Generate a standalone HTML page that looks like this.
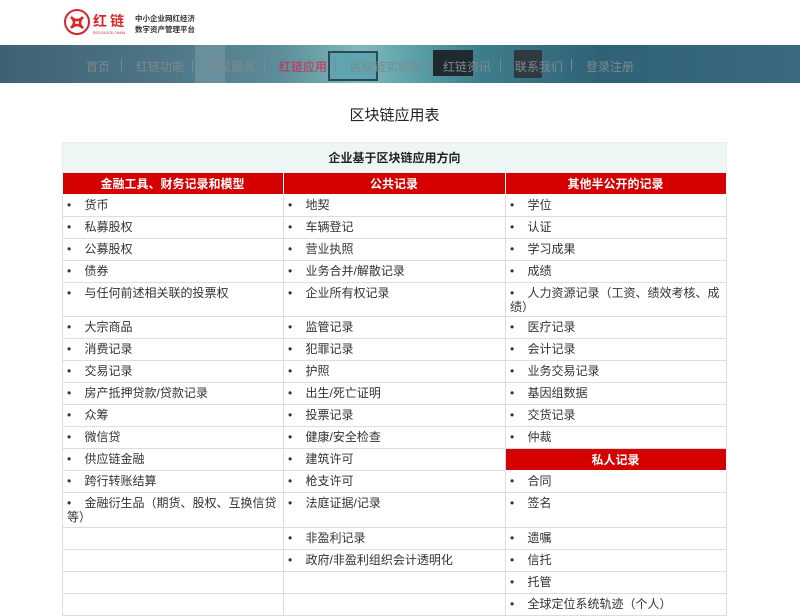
<!DOCTYPE html>
<html><head><meta charset="utf-8"><style>
*{margin:0;padding:0;box-sizing:border-box}
body{width:800px;height:609px;overflow:hidden;background:#fff;font-family:"Liberation Sans","Noto Sans CJK SC",sans-serif;font-size:12px;color:#333;position:relative}
.logo{position:absolute;left:63px;top:9px}
.nav{position:absolute;left:0;top:45px;width:800px;height:38px;background:linear-gradient(90deg,#3d6274 0%,#4d7585 20%,#5c8d98 35%,#7fb8bd 45%,#5aa0a8 52%,#3f7d8c 60%,#2f6277 75%,#3a6a80 100%)}
.nav span{position:absolute;top:13px;font-size:12px;color:#7d8a8e}
.nav i{position:absolute;top:14px;width:1px;height:12px;background:#7d8a8e}
h1{position:absolute;top:104px;left:0;width:789px;text-align:center;font-size:15px;font-weight:normal;color:#222}
table{position:absolute;left:62px;top:142px;width:664px;border-collapse:collapse;table-layout:fixed}
td{border:1px solid #ddd;height:22px;padding:3px 5px 0 4px;vertical-align:top;line-height:14px;font-size:12px}
tr.t td{background:#eef6f5;height:30px;text-align:center;font-weight:bold;vertical-align:middle;padding:0;font-size:12px;color:#222;border-color:#e6eeee}
td.h{background:#d50000;color:#fff;text-align:center;font-weight:bold;padding-top:4px;border-color:#fff}
tr.d td{height:34px}
tr.e td{height:35px}
</style></head><body>
<div class="logo">
<svg width="140" height="28" viewBox="0 0 140 28">
<circle cx="14" cy="13" r="12" fill="none" stroke="#d9252a" stroke-width="2"/>
<path d="M8 8 Q14 14 20 8 Q14 14 20 19 Q14 13 8 19 Q14 13 8 8Z" fill="none" stroke="#d9252a" stroke-width="2.5"/>
<text x="30" y="17" font-size="14" font-weight="bold" fill="#d9252a" font-family="Noto Sans CJK SC">红 链</text>
<text x="30" y="25" font-size="3.5" fill="#d9252a">RED BLOCK CHAIN</text>
<text x="72" y="12" font-size="7.5" font-weight="bold" fill="#333" font-family="Noto Sans CJK SC">中小企业网红经济</text>
<text x="72" y="23" font-size="7.5" font-weight="bold" fill="#333" font-family="Noto Sans CJK SC">数字资产管理平台</text>
</svg></div>
<div class="nav">
<div style="position:absolute;left:195px;top:0;width:30px;height:38px;background:#86a9b4;opacity:.4"></div>
<div style="position:absolute;left:328px;top:6px;width:50px;height:30px;background:#5fa4ae;border:2px solid #2c4a55"></div>
<div style="position:absolute;left:433px;top:5px;width:40px;height:26px;background:#1e2a30"></div>
<div style="position:absolute;left:514px;top:5px;width:28px;height:28px;background:#2e3a40"></div>
<span style="left:86px">首页</span><i style="left:121px"></i>
<span style="left:136px">红链功能</span><i style="left:192px"></i>
<span style="left:207px">专属服务</span><i style="left:264px"></i>
<span style="left:279px;color:#d9254e">红链应用</span><i style="left:335px"></i>
<span style="left:350px">区块链实验室</span><i style="left:428px"></i>
<span style="left:443px">红链资讯</span><i style="left:500px"></i>
<span style="left:515px">联系我们</span><i style="left:571px"></i>
<span style="left:586px">登录注册</span>
</div>
<h1>区块链应用表</h1>
<table>
<colgroup><col style="width:221px"><col style="width:222px"><col style="width:221px"></colgroup>
<tr class="t"><td colspan="3">企业基于区块链应用方向</td></tr>
<tr><td class="h">金融工具、财务记录和模型</td><td class="h">公共记录</td><td class="h">其他半公开的记录</td></tr>
<tr><td>•&nbsp;&nbsp;&nbsp;&nbsp;货币</td><td>•&nbsp;&nbsp;&nbsp;&nbsp;地契</td><td>•&nbsp;&nbsp;&nbsp;&nbsp;学位</td></tr>
<tr><td>•&nbsp;&nbsp;&nbsp;&nbsp;私募股权</td><td>•&nbsp;&nbsp;&nbsp;&nbsp;车辆登记</td><td>•&nbsp;&nbsp;&nbsp;&nbsp;认证</td></tr>
<tr><td>•&nbsp;&nbsp;&nbsp;&nbsp;公募股权</td><td>•&nbsp;&nbsp;&nbsp;&nbsp;营业执照</td><td>•&nbsp;&nbsp;&nbsp;&nbsp;学习成果</td></tr>
<tr><td>•&nbsp;&nbsp;&nbsp;&nbsp;债券</td><td>•&nbsp;&nbsp;&nbsp;&nbsp;业务合并/解散记录</td><td>•&nbsp;&nbsp;&nbsp;&nbsp;成绩</td></tr>
<tr class="d"><td>•&nbsp;&nbsp;&nbsp;&nbsp;与任何前述相关联的投票权</td><td>•&nbsp;&nbsp;&nbsp;&nbsp;企业所有权记录</td><td>•&nbsp;&nbsp;&nbsp;&nbsp;人力资源记录（工资、绩效考核、成<br>绩）</td></tr>
<tr><td>•&nbsp;&nbsp;&nbsp;&nbsp;大宗商品</td><td>•&nbsp;&nbsp;&nbsp;&nbsp;监管记录</td><td>•&nbsp;&nbsp;&nbsp;&nbsp;医疗记录</td></tr>
<tr><td>•&nbsp;&nbsp;&nbsp;&nbsp;消费记录</td><td>•&nbsp;&nbsp;&nbsp;&nbsp;犯罪记录</td><td>•&nbsp;&nbsp;&nbsp;&nbsp;会计记录</td></tr>
<tr><td>•&nbsp;&nbsp;&nbsp;&nbsp;交易记录</td><td>•&nbsp;&nbsp;&nbsp;&nbsp;护照</td><td>•&nbsp;&nbsp;&nbsp;&nbsp;业务交易记录</td></tr>
<tr><td>•&nbsp;&nbsp;&nbsp;&nbsp;房产抵押贷款/贷款记录</td><td>•&nbsp;&nbsp;&nbsp;&nbsp;出生/死亡证明</td><td>•&nbsp;&nbsp;&nbsp;&nbsp;基因组数据</td></tr>
<tr><td>•&nbsp;&nbsp;&nbsp;&nbsp;众筹</td><td>•&nbsp;&nbsp;&nbsp;&nbsp;投票记录</td><td>•&nbsp;&nbsp;&nbsp;&nbsp;交货记录</td></tr>
<tr><td>•&nbsp;&nbsp;&nbsp;&nbsp;微信贷</td><td>•&nbsp;&nbsp;&nbsp;&nbsp;健康/安全检查</td><td>•&nbsp;&nbsp;&nbsp;&nbsp;仲裁</td></tr>
<tr><td>•&nbsp;&nbsp;&nbsp;&nbsp;供应链金融</td><td>•&nbsp;&nbsp;&nbsp;&nbsp;建筑许可</td><td class="h">私人记录</td></tr>
<tr><td>•&nbsp;&nbsp;&nbsp;&nbsp;跨行转账结算</td><td>•&nbsp;&nbsp;&nbsp;&nbsp;枪支许可</td><td>•&nbsp;&nbsp;&nbsp;&nbsp;合同</td></tr>
<tr class="e"><td>•&nbsp;&nbsp;&nbsp;&nbsp;金融衍生品（期货、股权、互换信贷<br>等）</td><td>•&nbsp;&nbsp;&nbsp;&nbsp;法庭证据/记录</td><td>•&nbsp;&nbsp;&nbsp;&nbsp;签名</td></tr>
<tr><td></td><td>•&nbsp;&nbsp;&nbsp;&nbsp;非盈利记录</td><td>•&nbsp;&nbsp;&nbsp;&nbsp;遗嘱</td></tr>
<tr><td></td><td>•&nbsp;&nbsp;&nbsp;&nbsp;政府/非盈利组织会计透明化</td><td>•&nbsp;&nbsp;&nbsp;&nbsp;信托</td></tr>
<tr><td></td><td></td><td>•&nbsp;&nbsp;&nbsp;&nbsp;托管</td></tr>
<tr><td></td><td></td><td>•&nbsp;&nbsp;&nbsp;&nbsp;全球定位系统轨迹（个人）</td></tr>
</table>
</body></html>
